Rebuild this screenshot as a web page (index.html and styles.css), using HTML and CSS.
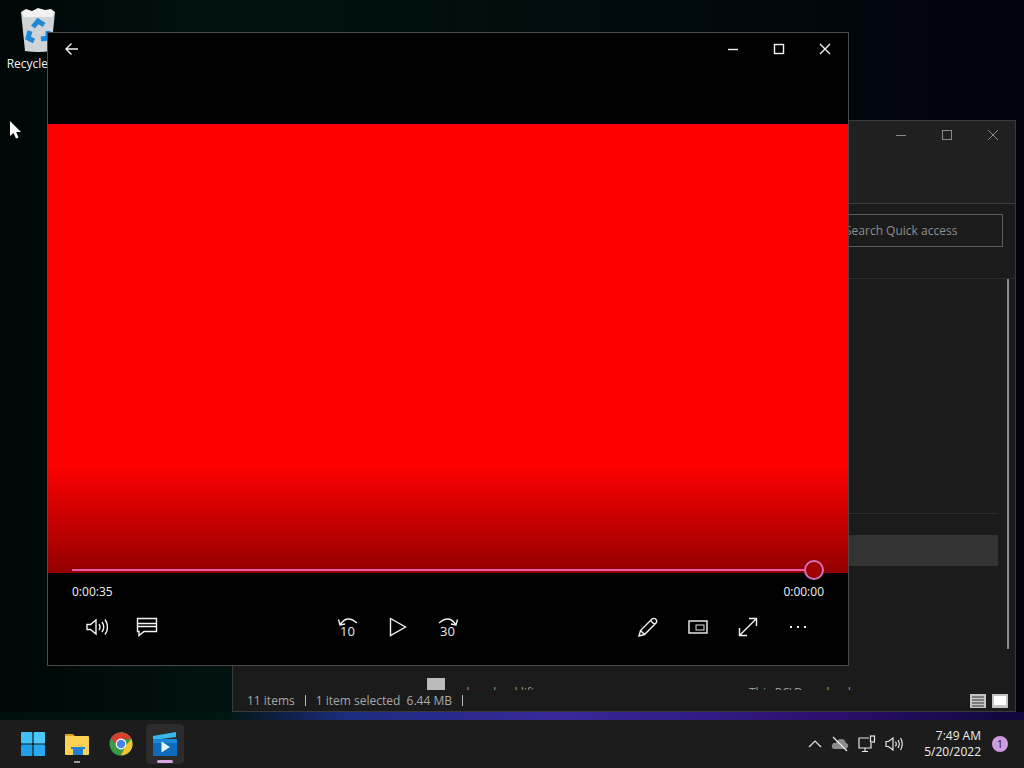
FILE: index.html
```html
<!DOCTYPE html>
<html lang="en">
<head>
  <meta charset="UTF-8">
  <title>Desktop</title>
  <link rel="stylesheet" href="styles.css">
</head>
<body>
  <div class="desktop">
    <div class="desk-icon">
      <svg width="40" height="44" viewBox="0 0 40 44">
        <path d="M3 4 L37 4 L33 43 Q20 45 7 43 Z" fill="#cfd4d8"/>
        <path d="M3 4 L8 1 L14 3 L20 0 L27 2 L33 1 L37 4 L34 9 L6 9 Z" fill="#f2f2f2"/>
        <g fill="none" stroke="#1e88d8" stroke-width="5">
          <path d="M15 19 L20 13 L26 17"/>
          <path d="M30 23 L30 30 L23 31"/>
          <path d="M16 33 L10 30 L12 23"/>
        </g>
      </svg>
      <span class="desk-label">Recycle Bin</span>
    </div>

    <svg class="cursor" width="12" height="18" viewBox="0 0 12 18">
      <path d="M0 0 L0 15 L3.5 12 L6 17.5 L8.5 16.5 L6.2 11 L11 11 Z" fill="#fff"/>
    </svg>

    <!-- explorer window, behind the player -->
    <div class="explorer">
      <div class="ex-title">
        <span class="ex-btn"><svg width="12" height="12" viewBox="0 0 12 12"><path d="M1 6.5H11" class="ex-stroke"/></svg></span>
        <span class="ex-btn"><svg width="12" height="12" viewBox="0 0 12 12"><rect x="1.5" y="1.5" width="9" height="9" class="ex-stroke"/></svg></span>
        <span class="ex-btn"><svg width="12" height="12" viewBox="0 0 12 12"><path d="M1 1L11 11M11 1L1 11" class="ex-stroke"/></svg></span>
      </div>
      <div class="ex-search-row">
        <div class="ex-search">Search Quick access</div>
      </div>
      <div class="ex-body">
        <div class="ex-scroll"></div>
        <div class="ex-group">
          <div class="ex-spacer"></div>
          <div class="ex-selected"></div>
          <div class="ex-row">
            <span class="ex-thumb"></span>
            <span class="ex-name">download.lifi</span>
            <span class="ex-path">This PC\Downloads</span>
          </div>
        </div>
      </div>
      <div class="ex-status">
        <span>11 items</span>
        <span class="ex-sep"></span>
        <span>1 item selected&nbsp; 6.44 MB</span>
        <span class="ex-sep"></span>
        <span class="ex-views">
          <svg width="16" height="14" viewBox="0 0 16 14"><rect width="16" height="14" fill="#c4c4c4"/><path d="M2 3H14M2 6H14M2 9H14M2 12H14" stroke="#333" stroke-width="1"/></svg>
          <svg width="16" height="14" viewBox="0 0 16 14"><rect width="16" height="14" fill="#c4c4c4"/><rect x="2" y="2" width="12" height="9" fill="#fff"/></svg>
        </span>
      </div>
    </div>

    <!-- movies & tv player -->
    <div class="player">
      <div class="pl-title">
        <svg class="pl-back" width="16" height="16" viewBox="0 0 16 16"><path d="M14 8H2.5M7.5 2.5L2 8L7.5 13.5" class="stroke"/></svg>
        <div class="pl-winbtns">
          <svg width="12" height="12" viewBox="0 0 12 12"><path d="M1 6.5H11" class="stroke"/></svg>
          <svg width="12" height="12" viewBox="0 0 12 12"><rect x="1.5" y="1.5" width="9" height="9" class="stroke"/></svg>
          <svg width="12" height="12" viewBox="0 0 12 12"><path d="M1 1L11 11M11 1L1 11" class="stroke"/></svg>
        </div>
      </div>
      <div class="pl-video">
        <div class="pl-track"></div>
        <div class="pl-thumb"></div>
      </div>
      <div class="pl-times">
        <span>0:00:35</span>
        <span>0:00:00</span>
      </div>
      <div class="pl-controls">
        <div class="pl-group">
          <button class="ctl">
            <svg width="22" height="18" viewBox="0 0 22 18"><path d="M1 6.5H4.5L10 2V16L4.5 11.5H1Z M13 6Q15 9 13 12 M16 4Q19.5 9 16 14 M19 1.5Q24 9 19 16.5" class="stroke"/></svg>
          </button>
          <button class="ctl">
            <svg width="22" height="20" viewBox="0 0 22 20"><path d="M1.5 1.5H20.5V14.5H8L3 18.5V14.5H1.5Z M2 6.5H20 M2 9.5H20" class="stroke"/></svg>
          </button>
        </div>
        <div class="pl-group">
          <button class="ctl skip">
            <svg width="22" height="10" viewBox="0 0 22 10"><path d="M3 9Q10 -2 20 7 M1.5 3.5L3 9L8 8" class="stroke"/></svg>
            <span class="skip-num">10</span>
          </button>
          <button class="ctl">
            <svg width="18" height="20" viewBox="0 0 18 20"><path d="M1.5 1.5L16.5 10L1.5 18.5Z" class="stroke"/></svg>
          </button>
          <button class="ctl skip">
            <svg width="22" height="10" viewBox="0 0 22 10"><path d="M19 9Q12 -2 2 7 M20.5 3.5L19 9L14 8" class="stroke"/></svg>
            <span class="skip-num">30</span>
          </button>
        </div>
        <div class="pl-group">
          <button class="ctl">
            <svg width="20" height="20" viewBox="0 0 20 20"><path d="M1 19L2.5 13.5L14 2Q16 0.5 18 2.5Q19.5 4.5 18 6L6.5 17.5Z M12.5 3.5L16.5 7.5 M2.5 13.5L6.5 17.5" class="stroke"/></svg>
          </button>
          <button class="ctl">
            <svg width="20" height="14" viewBox="0 0 20 14"><rect x="1" y="1" width="18" height="12" class="stroke"/><rect x="8" y="5" width="8" height="5" class="stroke-thin"/></svg>
          </button>
          <button class="ctl">
            <svg width="20" height="20" viewBox="0 0 20 20"><path d="M1.5 18.5L18.5 1.5 M11 1.5H18.5V9 M1.5 11V18.5H9" class="stroke"/></svg>
          </button>
          <button class="ctl dots"><i></i><i></i><i></i></button>
        </div>
      </div>
    </div>
  </div>

  <div class="taskbar">
    <div class="tb-apps">
      <div class="tb-app">
        <svg width="24" height="24" viewBox="0 0 24 24">
          <rect x="0" y="0" width="11.4" height="11.4" rx="1" fill="#3fc1f5"/>
          <rect x="12.6" y="0" width="11.4" height="11.4" rx="1" fill="#4cc8f8"/>
          <rect x="0" y="12.6" width="11.4" height="11.4" rx="1" fill="#1f9fe8"/>
          <rect x="12.6" y="12.6" width="11.4" height="11.4" rx="1" fill="#2aa9ee"/>
        </svg>
      </div>
      <div class="tb-app">
        <svg width="26" height="24" viewBox="0 0 26 24">
          <path d="M1 2H9L12 5H1Z" fill="#d9a520"/>
          <rect x="1" y="4" width="24" height="19" rx="1" fill="#fbd154"/>
          <rect x="9" y="15" width="10" height="8" fill="#1f7fd0"/>
          <rect x="7" y="15" width="14" height="2" fill="#1f7fd0"/>
        </svg>
        <span class="tb-dot"></span>
      </div>
      <div class="tb-app">
        <svg width="24" height="24" viewBox="0 0 24 24">
          <circle cx="12" cy="12" r="11.5" fill="#3a9a48"/>
          <path d="M12 .5A11.5 11.5 0 0 1 22.4 7H12Z" fill="#f2c230"/>
          <path d="M2 6.3A11.5 11.5 0 0 1 22.4 7H12L8 14Z" fill="#d8402f"/>
          <path d="M22.4 7A11.5 11.5 0 0 1 12 23.5L16.5 14Z" fill="#f6c52c"/>
          <circle cx="12" cy="12" r="5.4" fill="#fff"/>
          <circle cx="12" cy="12" r="4.2" fill="#4a86e0"/>
        </svg>
      </div>
      <div class="tb-app active">
        <svg width="26" height="26" viewBox="0 0 26 26">
          <path d="M1 5L24 1V6L1 9Z" fill="#39b6ea"/>
          <rect x="1" y="8" width="24" height="17" fill="#0f6cbd"/>
          <path d="M1 8H25V12H1Z" fill="#1a86d8"/>
          <path d="M9.5 10.5L18 16L9.5 21.5Z" fill="#e6f4fc"/>
        </svg>
        <span class="tb-run"></span>
      </div>
    </div>
    <div class="tb-tray">
      <svg width="14" height="8" viewBox="0 0 14 8"><path d="M1 7L7 1L13 7" class="stroke-tray"/></svg>
      <svg width="18" height="16" viewBox="0 0 18 16"><path d="M3 13Q0 12 1 9Q2 6 5 7Q6 3 10 3Q14 3 15 7Q18 8 17 11Q16 13 14 13Z" fill="#8c8c8c"/><path d="M2 1L16 15" stroke="#e8e8e8" stroke-width="1.2"/></svg>
      <svg width="18" height="18" viewBox="0 0 18 18"><path d="M11 3H1V13H13V8 M7 13V16 M4 16.5H10" class="stroke-tray"/><rect x="12.5" y="1" width="4" height="6" class="stroke-tray"/></svg>
      <svg width="18" height="14" viewBox="0 0 18 14"><path d="M1 4.5H3.5L8 1V13L3.5 9.5H1Z M10.5 4.5Q12 7 10.5 9.5 M13 3Q15.5 7 13 11 M15.5 1Q19 7 15.5 13" class="stroke-tray"/></svg>
      <div class="tb-clock">
        <span>7:49 AM</span>
        <span>5/20/2022</span>
      </div>
      <span class="tb-badge">1</span>
    </div>
  </div>
</body>
</html>
```

FILE: styles.css
```css
* {
  margin: 0;
  padding: 0;
  box-sizing: border-box;
}

body {
  width: 1024px;
  height: 768px;
  overflow: hidden;
  font-family: "Open Sans", "Liberation Sans", sans-serif;
  background-color: #000;
}

.stroke {
  fill: none;
  stroke: #f2f2f2;
  stroke-width: 1.4;
}

.stroke-thin {
  fill: none;
  stroke: #e0e0e0;
  stroke-width: 1;
}

.stroke-tray {
  fill: none;
  stroke: #e6e6e6;
  stroke-width: 1.2;
}

.desktop {
  position: relative;
  height: 720px;
  overflow: hidden;
  background:
    linear-gradient(90deg, #00100e 0, #001612 22%, #1c2c80 34%, #38289a 55%, #2c1070 80%, #10063a 100%) bottom / 100% 8px no-repeat,
    linear-gradient(90deg, #000706 0, #001210 20%, #00100e 40%, #02020c 100%);
}

.desk-icon {
  position: absolute;
  left: 0;
  top: 8px;
  width: 76px;
  display: flex;
  flex-direction: column;
  align-items: center;
  gap: 3px;
}

.desk-label {
  font-size: 12px;
  color: #f0f0f0;
  white-space: nowrap;
}

.cursor {
  position: absolute;
  left: 10px;
  top: 121px;
}

/* Explorer */
.explorer {
  position: absolute;
  left: 232px;
  top: 120px;
  width: 784px;
  height: 592px;
  background-color: #1b1b1b;
  border: 1px solid #3a3a3a;
  display: flex;
  flex-direction: column;
}

.ex-title {
  height: 83px;
  flex-shrink: 0;
  display: flex;
  justify-content: flex-end;
  align-items: flex-start;
  gap: 34px;
  padding: 8px 16px 0 0;
  background-color: #202020;
  border-bottom: 1px solid #3c3c3c;
}

.ex-btn {
  display: flex;
}

.ex-stroke {
  fill: none;
  stroke: #8a8a8a;
  stroke-width: 1;
}

.ex-search-row {
  height: 75px;
  flex-shrink: 0;
  padding: 10px 12px 0 0;
  display: flex;
  justify-content: flex-end;
  border-bottom: 1px solid #2c2c2c;
}

.ex-search {
  width: 300px;
  height: 33px;
  border: 1px solid #5c5c5c;
  color: #8e8e8e;
  font-size: 12px;
  line-height: 31px;
  padding-left: 141px;
  white-space: nowrap;
}

.ex-body {
  flex: 1;
  min-height: 0;
  overflow: hidden;
  position: relative;
  padding-right: 17px;
}

.ex-scroll {
  position: absolute;
  right: 6px;
  top: 0;
  width: 2px;
  height: 370px;
  background-color: #8c8c8c;
}

.ex-spacer {
  height: 235px;
  border-bottom: 1px solid #2c2c2c;
}

.ex-selected {
  height: 31px;
  margin-top: 21px;
  background-color: #333;
}

.ex-row {
  margin-top: 112px;
  height: 24px;
  display: flex;
  gap: 17px;
  padding-left: 194px;
  font-size: 12px;
  color: #999;
}

.ex-thumb {
  width: 18px;
  height: 24px;
  background-color: #bbb;
}

.ex-name {
  width: 270px;
  padding-top: 6px;
}

.ex-path {
  padding-top: 6px;
}

.ex-status {
  height: 21px;
  flex-shrink: 0;
  display: flex;
  align-items: center;
  gap: 10px;
  padding: 0 7px 0 14px;
  font-size: 12px;
  color: #a8a8a8;
  background-color: #1b1b1b;
}

.ex-sep {
  width: 1px;
  height: 11px;
  background-color: #bbb;
}

.ex-views {
  margin-left: auto;
  display: flex;
  gap: 6px;
}

/* Player */
.player {
  position: absolute;
  left: 47px;
  top: 32px;
  width: 802px;
  height: 634px;
  background-color: #000;
  border: 1px solid #4a4a4a;
  display: flex;
  flex-direction: column;
}

.pl-title {
  height: 91px;
  flex-shrink: 0;
  display: flex;
  justify-content: space-between;
  align-items: flex-start;
  padding: 8px 17px 0 16px;
}

.pl-winbtns {
  display: flex;
  gap: 34px;
  padding-top: 2px;
}

.pl-video {
  position: relative;
  height: 449px;
  flex-shrink: 0;
  background: linear-gradient(180deg, #ff0000 0, #ff0000 76%, #930000 100%);
}

.pl-track {
  position: absolute;
  left: 24px;
  top: 445px;
  width: 742px;
  height: 2px;
  background-color: #e85aa8;
}

.pl-thumb {
  position: absolute;
  left: 756px;
  top: 436px;
  width: 20px;
  height: 20px;
  border: 2px solid #d070b8;
  border-radius: 50%;
  background-color: #a00000;
}

.pl-times {
  display: flex;
  justify-content: space-between;
  padding: 10px 24px 0;
  font-size: 12px;
  line-height: 17px;
  color: #f2f2f2;
}

.pl-controls {
  display: flex;
  justify-content: space-between;
  padding: 7px 25px 0 24px;
}

.pl-group {
  display: flex;
  gap: 0;
}

.ctl {
  width: 50px;
  height: 40px;
  background: none;
  border: none;
  display: flex;
  flex-direction: column;
  align-items: center;
  justify-content: center;
  color: #e8e8e8;
  font-family: inherit;
}

.skip-num {
  font-size: 13px;
  line-height: 13px;
  margin-top: -1px;
}

.dots {
  flex-direction: row;
  gap: 5px;
}

.dots i {
  width: 2px;
  height: 2px;
  background-color: #f2f2f2;
}

/* Taskbar */
.taskbar {
  height: 48px;
  background-color: #1c1c1c;
  display: flex;
  justify-content: space-between;
  align-items: center;
  padding: 0 16px 0 11px;
}

.tb-apps {
  display: flex;
  gap: 0;
}

.tb-app {
  position: relative;
  width: 44px;
  height: 40px;
  display: flex;
  align-items: center;
  justify-content: center;
}

.tb-app.active {
  background-color: #2c2c2c;
  border-radius: 4px;
  width: 38px;
  margin-left: 3px;
}

.tb-dot {
  position: absolute;
  left: 19px;
  bottom: 1px;
  width: 6px;
  height: 2px;
  background-color: #9a9a9a;
}

.tb-run {
  position: absolute;
  left: 11px;
  bottom: 1px;
  width: 16px;
  height: 3px;
  border-radius: 2px;
  background-color: #d4a8dc;
}

.tb-tray {
  display: flex;
  align-items: center;
  gap: 9px;
  color: #eee;
  font-size: 12px;
}

.tb-clock {
  display: flex;
  flex-direction: column;
  align-items: flex-end;
  line-height: 16px;
  margin-left: 12px;
}

.tb-badge {
  width: 16px;
  height: 16px;
  margin-left: 2px;
  border-radius: 50%;
  background-color: #d09ade;
  color: #222;
  font-size: 11px;
  line-height: 16px;
  text-align: center;
}
```
